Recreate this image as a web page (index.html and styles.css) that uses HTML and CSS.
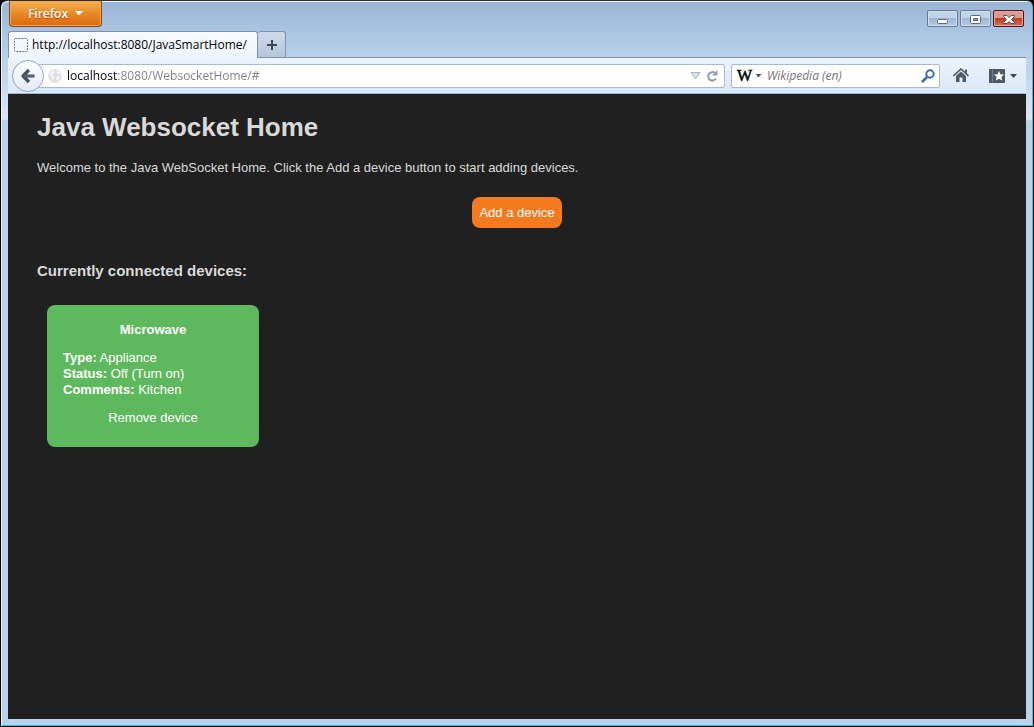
FILE: index.html
```html
<!DOCTYPE html>
<html lang="en">
<head>
<meta charset="utf-8">
<title>Java Websocket Home</title>
<link rel="stylesheet" href="styles.css">
</head>
<body>
<div class="window">
  <header class="titlebar">
    <button class="app-menu" type="button">Firefox
      <svg width="8" height="5" viewBox="0 0 8 5"><path d="M0 0h8L4 4.500z" fill="#fff"/></svg>
    </button>
    <div class="window-controls">
      <button class="control" type="button" aria-label="Minimize">
        <svg width="12" height="12" viewBox="0 0 12 12"><rect x=".5" y="6.500" width="10" height="4" rx="1" fill="#fff" stroke="#5d6878"/></svg>
      </button>
      <button class="control" type="button" aria-label="Maximize">
        <svg width="12" height="12" viewBox="0 0 12 12"><rect x=".5" y="2.500" width="10" height="8" rx="1" fill="#fff" stroke="#5d6878"/><rect x="3.500" y="5.500" width="4" height="2" fill="#8aa3c4" stroke="#5d6878"/></svg>
      </button>
      <button class="control control-close" type="button" aria-label="Close">
        <svg width="12" height="12" viewBox="0 0 12 12"><path d="M.5 2.500h3.500l2 2 2-2h3.500v1L8.500 6.500l3 3v1H8l-2-2-2 2H.5v-1l3-3-3-3z" fill="#fff" stroke="#5b4652"/></svg>
      </button>
    </div>
  </header>

  <div class="tabs" role="tablist">
    <button class="tab" type="button" role="tab" aria-selected="true">
      <svg width="14" height="14" viewBox="0 0 14 14"><rect x=".5" y=".5" width="13" height="13" rx="1" fill="none" stroke="#687078" stroke-dasharray="2 1"/></svg>
      http://localhost:8080/JavaSmartHome/
    </button>
    <button class="new-tab" type="button" aria-label="New tab">
      <svg width="12" height="12" viewBox="0 0 12 12"><path d="M6 1v10M1 6h10" stroke="#3c4653" stroke-width="2"/></svg>
    </button>
  </div>

  <nav class="toolbar">
    <button class="back" type="button" aria-label="Back">
      <svg width="16" height="16" viewBox="0 0 16 16"><path d="M14.500 8H3.500M9 2L3 8l6 6" fill="none" stroke="#46525e" stroke-width="3.200" stroke-linejoin="round"/><path d="M14 8H4" stroke="#66727e"/></svg>
    </button>
    <div class="field address">
      <svg width="14" height="14" viewBox="0 0 14 14"><circle cx="7" cy="7" r="6.800" fill="#dedede"/><path d="M1.500 5l2.500-3 3 .5-.5 2-2 1 .5 1.500 2 1-1.500 3-1.500-.5-1-3zM8.500 1.500l3 1.500 1.500 3-1.500-1-2 .5-1-2zM9 7l3 .5-1 3-2 1.500-1-2.500z" fill="#f7f7f7"/></svg>
      <input class="address-input" type="text" aria-label="Address" value="localhost:8080/WebsocketHome/#">
      <svg width="11" height="8" viewBox="0 0 11 8"><path d="M1 .5h9L5.500 7z" fill="#dbe0e5" stroke="#a9b3bd"/></svg>
      <button class="icon-button" type="button" aria-label="Reload">
        <svg width="12" height="12" viewBox="0 0 12 12"><path d="M9 3A4.200 4.200 0 1 0 10 8.500" fill="none" stroke="#919dab" stroke-width="2"/><path d="M11.500 0v5.500H6z" fill="#919dab"/></svg>
      </button>
    </div>
    <div class="field search">
      <button class="engine" type="button" aria-label="Search engine">W
        <svg width="7" height="4" viewBox="0 0 7 4"><path d="M.5 0h6l-3 3.500z" fill="#555"/></svg>
      </button>
      <input class="search-input" type="text" aria-label="Search" placeholder="Wikipedia (en)">
      <button class="icon-button" type="button" aria-label="Search">
        <svg width="14" height="14" viewBox="0 0 14 14"><circle cx="9" cy="5" r="3.700" fill="none" stroke="#3971ad" stroke-width="2"/><path d="M6 8l-5 5" stroke="#3971ad" stroke-width="2.600"/></svg>
      </button>
    </div>
    <button class="icon-button home" type="button" aria-label="Home">
      <svg width="16" height="15" viewBox="0 0 16 15"><path d="M.5 8L8 1l7.500 7" fill="none" stroke="#505b66" stroke-width="1.600"/><path d="M12 1.500h2v4l-2-2zM3 8l5-4.500L13 8v6H9.500V9.500h-3V14H3z" fill="#505b66"/></svg>
    </button>
    <button class="icon-button bookmarks" type="button" aria-label="Bookmarks">
      <svg width="16" height="14" viewBox="0 0 16 14"><rect width="16" height="14" rx="1" fill="#4c5864"/><path d="M3.500 1v12" stroke="#75818d"/><path d="M10 2l1.500 3.200 3.500.4-2.600 2.400.8 3.600L10 9.800l-3.200 1.800.8-3.600L5 5.600l3.500-.4z" fill="#fff"/></svg>
      <svg width="7" height="4" viewBox="0 0 7 4"><path d="M0 0h7L3.500 4z" fill="#3c4650"/></svg>
    </button>
  </nav>

  <main class="page">
    <h1 class="title">Java Websocket Home</h1>
    <p class="intro">Welcome to the Java WebSocket Home. Click the Add a device button to start adding devices.</p>
    <div class="actions"><button class="add" type="button">Add a device</button></div>
    <h2 class="subtitle">Currently connected devices:</h2>
    <article class="device">
      <h3 class="device-name">Microwave</h3>
      <div><b>Type:</b> Appliance</div>
      <div><b>Status:</b> Off (<a class="link" href="#">Turn on</a>)</div>
      <div><b>Comments:</b> Kitchen</div>
      <a class="link remove" href="#">Remove device</a>
    </article>
  </main>
</div>
</body>
</html>
```
FILE: styles.css
```css
* {
  box-sizing: border-box;
}

body {
  margin: 0;
  background: #000;
  font: 12px/16px "Open Sans", "Noto Sans", sans-serif;
}

button,
input {
  margin: 0;
  padding: 0;
  border: 0;
  background: none;
  color: inherit;
  font: inherit;
}

svg {
  display: block;
  flex: none;
}

.window {
  display: flex;
  flex-direction: column;
  min-height: 100vh;
  padding: 0 6px 7px;
  border: 1px solid #000;
  border-top-color: #2b2b33;
  border-radius: 7px 7px 0 0;
  background: linear-gradient(#9ab5d5, #b9d1ea 56px, #dbe7f5 118px, #b9d1ea 120px);
  box-shadow: inset 1px 1px #eef5fc, inset -1px -1px #27c3e6;
}

.titlebar {
  display: flex;
  justify-content: space-between;
  height: 30px;
  padding: 0 3px 0 2px;
}

.app-menu {
  display: flex;
  align-items: center;
  justify-content: center;
  gap: 7px;
  width: 93px;
  height: 26px;
  border: 1px solid #7d4a1c;
  border-top: 0;
  border-radius: 0 0 4px 4px;
  background: linear-gradient(#f5b252, #e98a28 50%, #d9670f);
  box-shadow: inset 0 0 0 1px #f4a850;
  color: #fff;
  font-weight: 600;
  text-shadow: 0 1px 1px #a04a08;
}

.window-controls {
  display: flex;
  gap: 2px;
  margin-top: 9px;
}

.control {
  display: flex;
  align-items: center;
  justify-content: center;
  width: 31px;
  height: 17px;
  border: 1px solid #65799a;
  border-radius: 2px;
  background: linear-gradient(#c2d3e8 50%, #9eb7d5 50%, #b4cae3);
  box-shadow: inset 0 0 0 1px #d3e0ef;
}

.control-close {
  border-color: #4c1424;
  background: linear-gradient(#df9a8c 45%, #bb3e26 50%, #d47052);
  box-shadow: inset 0 0 0 1px #e7a99b;
}

.tabs {
  display: flex;
  height: 27px;
  margin: 0 1px;
  border-bottom: 1px solid #7e91a9;
}

.tab {
  display: flex;
  align-items: center;
  gap: 4px;
  width: 250px;
  height: 27px;
  padding: 0 5px;
  border: 1px solid #7e91a9;
  border-bottom: 0;
  border-radius: 3px 3px 0 0;
  background: linear-gradient(#fafcff, #ecf4fd);
  color: #000;
  white-space: nowrap;
}

.new-tab {
  display: flex;
  align-items: center;
  justify-content: center;
  width: 28px;
  height: 26px;
  border: 1px solid #7e91a9;
  border-left: 0;
  border-bottom: 0;
  border-radius: 3px 3px 0 0;
  background: linear-gradient(#cdd9e8, #b7c7da);
}

.toolbar {
  display: flex;
  align-items: center;
  height: 36px;
  margin: 0 1px;
  padding: 0 9px 0 4px;
  border-bottom: 1px solid #a3b7ce;
  background: linear-gradient(#ecf4fd, #dae8f7);
}

.back {
  display: flex;
  align-items: center;
  justify-content: center;
  z-index: 1;
  flex: none;
  width: 32px;
  height: 32px;
  border: 1px solid #93a5bb;
  border-radius: 50%;
  background: linear-gradient(#fff, #e3ebf4);
}

.field {
  display: flex;
  align-items: center;
  height: 24px;
  border: 1px solid #a9bace;
  border-radius: 2px;
  background: #fff;
}

.address {
  flex: 1;
  gap: 5px;
  margin-left: -6px;
  padding: 0 6px 0 9px;
}

.address-input {
  flex: 1;
  min-width: 0;
  background: linear-gradient(90deg, #000 50px, #808080 50px);
  background-clip: text;
  -webkit-text-fill-color: transparent;
  caret-color: #000;
}

.search {
  width: 209px;
  margin-left: 6px;
  padding: 0 4px 0 5px;
}

.engine {
  display: flex;
  align-items: center;
  gap: 3px;
  font: 16px/20px "Liberation Serif", serif;
  color: #000;
  -webkit-text-stroke: 0.5px #000;
}

.search-input {
  flex: 1;
  min-width: 0;
  margin-left: 5px;
  font-style: italic;
}

.search-input::placeholder {
  color: #777;
  opacity: 1;
}

.icon-button {
  display: flex;
  align-items: center;
}

.home {
  margin-left: 13px;
}

.bookmarks {
  gap: 5px;
  margin-left: 20px;
}

.page {
  flex: 1;
  margin: 0 1px;
  padding: 16px 29px;
  background: #202020;
  color: #d9d9d9;
  font: 13px/16px "Liberation Sans", Arial, sans-serif;
}

.title {
  margin: 0;
  font-size: 26px;
  line-height: 34px;
}

.intro {
  margin: 16px 0 21px;
}

.actions {
  display: flex;
  justify-content: center;
}

.add {
  height: 31px;
  padding: 0 7px;
  border-radius: 8px;
  background: #f47a20;
  color: #fff;
}

.subtitle {
  margin: 34px 0 25px;
  font-size: 15px;
  line-height: 18px;
}

.device {
  width: 212px;
  margin-left: 10px;
  padding: 17px 16px 21px;
  border-radius: 8px;
  background: #5eb85e;
  color: #fff;
}

.device-name {
  margin: 0 0 12px;
  font-size: 13px;
  line-height: 16px;
  text-align: center;
}

.link {
  color: inherit;
  text-decoration: none;
}

.remove {
  display: block;
  margin-top: 12px;
  text-align: center;
}
```
